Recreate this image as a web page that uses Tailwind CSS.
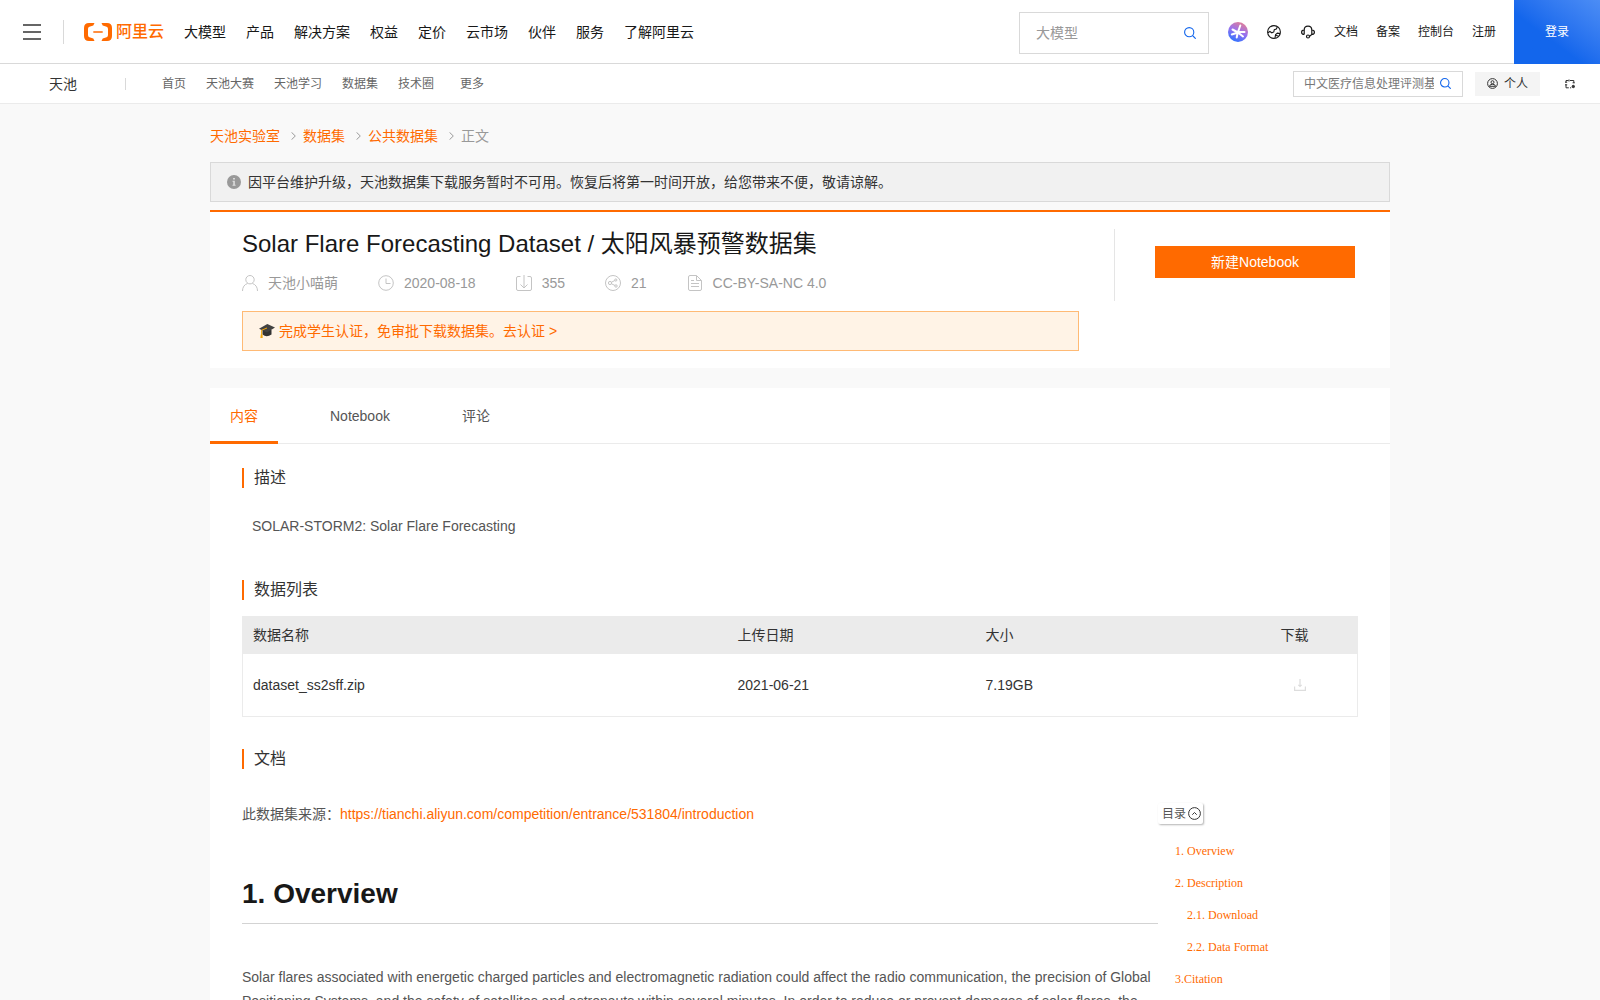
<!DOCTYPE html>
<html lang="zh-CN">
<head>
    <meta charset="UTF-8">
    <meta name="viewport" content="width=device-width, initial-scale=1.0">
    <title>Solar Flare Forecasting Dataset</title>
    <script src="https://cdn.jsdelivr.net/npm/@tailwindcss/browser@4"></script>
</head>
<body class="bg-[#f9f9f9] font-['Liberation_Sans','Noto_Sans_CJK_SC',sans-serif] text-sm text-[#181818]">
    <!-- top bar -->
    <header class="flex h-16 items-center border-b border-[#d9d9d9] bg-white">
        <button aria-label="菜单" class="ml-[23px] text-[#666]">
            <svg class="block" width="18" height="18" viewBox="0 0 18 18" stroke="currentColor" stroke-width="2"><path d="M0 2h18M0 9h18M0 16h18"/></svg>
        </button>
        <div class="ml-[22px] h-6 w-px bg-[#d9d9d9]"></div>
        <a href="#" class="ml-5 flex items-center gap-1 text-[#ff6a00]">
            <svg width="28" height="18" viewBox="0 0 28 18" fill="currentColor"><path d="M10.500 0H5Q0 0 0 5v8q0 5 5 5h5.500L9.300 15.400 5.400 14.300Q4 13.800 4 12V6q0-1.800 1.400-2.300L9.300 2.600zM17.500 0H23q5 0 5 5v8q0 5-5 5h-5.500l1.200-2.600 3.900-1.100Q24 13.800 24 12V6q0-1.800-1.400-2.300l-3.900-1.100zM9.300 8.200h9.400v1.600H9.300z"/></svg>
            <span class="text-base leading-6 font-medium">阿里云</span>
        </a>
        <nav class="ml-5 flex gap-5">
            <a href="#">大模型</a>
            <a href="#">产品</a>
            <a href="#">解决方案</a>
            <a href="#">权益</a>
            <a href="#">定价</a>
            <a href="#">云市场</a>
            <a href="#">伙伴</a>
            <a href="#">服务</a>
            <a href="#">了解阿里云</a>
        </nav>
        <form class="mt-0.5 ml-auto flex h-[42px] w-[190px] items-center border border-[#d9d9d9] pr-3 pl-4">
            <input type="text" aria-label="搜索" placeholder="大模型" class="min-w-0 flex-1 outline-none placeholder:text-[#999]">
            <button aria-label="搜索" class="text-[#1366ec]">
                <svg class="block" width="12" height="12" viewBox="0 0 12 12" fill="none" stroke="currentColor" stroke-width="1.100"><circle cx="5.200" cy="5.200" r="4.600"/><path d="M8.500 8.500l3.200 3.200"/></svg>
            </button>
        </form>
        <div class="ml-[19px] flex items-center pt-px text-xs">
            <a href="#" aria-label="AI 助理">
                <svg width="20" height="20" viewBox="0 0 20 20"><defs><linearGradient id="ai" x1="0.800" y1="0" x2="0.350" y2="1"><stop offset="0" stop-color="#e8808f"/><stop offset="0.500" stop-color="#9a72ee"/><stop offset="1" stop-color="#2f72ff"/></linearGradient></defs><circle cx="10" cy="10" r="10" fill="url(#ai)"/><path d="M12.300 3.500L10 10M4.500 7.500L10 10.500M3.800 12.500l6.200-2M8.700 15.500l1-5M15 14.500l-5-4M16.500 10H10" stroke="#fff" stroke-width="2" stroke-linecap="round"/></svg>
            </a>
            <a href="#" aria-label="语言" class="ml-[19px]">
                <svg width="14" height="14" viewBox="0 0 14 14" fill="none" stroke="currentColor" stroke-width="1.100"><circle cx="7" cy="7" r="6.400"/><path d="M.9 7.800l2-1.300 1.900 1.300 2-.9.5-2.300 2-.6 1-2M8 12.900l.6-3.400 1.800-1.300 2.800.4M9 10.500l2.300.5"/></svg>
            </a>
            <a href="#" aria-label="客服" class="mr-[19px] ml-5">
                <svg width="14" height="14" viewBox="0 0 14 14" fill="none" stroke="currentColor" stroke-width="1.200"><path d="M3.200 9.500V5.200q0-4 3.800-4t3.800 4v4.300L8.600 11.200M3.200 5Q.6 5 .6 7.200t2.600 2.300M10.800 5q2.600 0 2.600 2.200t-2.600 2.300"/><circle cx="7" cy="11.500" r="1.500"/></svg>
            </a>
            <div class="flex gap-[18px]">
                <a href="#">文档</a>
                <a href="#">备案</a>
                <a href="#">控制台</a>
                <a href="#">注册</a>
            </div>
        </div>
        <a href="#" class="ml-[18px] flex h-16 w-[86px] items-center justify-center bg-linear-to-tr from-[#1366ec] from-40% to-[#4c8df5] text-xs text-white">登录</a>
    </header>

    <!-- product bar -->
    <div class="flex h-10 items-center border-b border-[#ebebeb] bg-white text-xs text-[#666]">
        <a href="#" class="ml-[49px] text-sm text-[#333]">天池</a>
        <div class="ml-12 h-3 w-px bg-[#d9d9d9]"></div>
        <nav class="ml-9 flex gap-5 pt-px">
            <a href="#">首页</a>
            <a href="#">天池大赛</a>
            <a href="#">天池学习</a>
            <a href="#">数据集</a>
            <a href="#">技术圈</a>
            <a href="#" class="ml-1.5">更多</a>
        </nav>
        <form class="ml-auto flex h-[26px] w-[170px] items-center gap-1.5 border border-[#d9d9d9] pr-[11px] pl-2.5">
            <input type="text" aria-label="搜索天池" placeholder="中文医疗信息处理评测基准" class="min-w-0 flex-1 outline-none placeholder:text-[#777]">
            <button aria-label="搜索天池" class="text-[#1366ec]">
                <svg class="block" width="11" height="11" viewBox="0 0 12 12" fill="none" stroke="currentColor" stroke-width="1.200"><circle cx="5.200" cy="5.200" r="4.600"/><path d="M8.500 8.500l3.200 3.200"/></svg>
            </button>
        </form>
        <button class="ml-3 flex h-6 w-[65px] items-center justify-center gap-1.5 bg-[#f4f4f4] text-[#333]">
            <svg width="11" height="11" viewBox="0 0 11 11" fill="none" stroke="currentColor"><circle cx="5.500" cy="5.500" r="4.900"/><circle cx="5.500" cy="4.200" r="1.500"/><path d="M2.500 8.300q0-2 3-2t3 2z"/></svg>
            个人
        </button>
        <button aria-label="切换" class="mr-[25px] ml-[25px] text-[#333]">
            <svg class="block" width="10" height="10" viewBox="0 0 10 10" fill="none" stroke="currentColor"><path d="M3.500 1.500H1v2M0 3.200h2.200M5 1.500h3.800v2.300M4 .5v2M7.600 3.800h2.200M1 5.500v3.300h2.800M0 5.800h2.200M5 8.800h1.200"/><circle cx="8.300" cy="7.500" r="1.200" fill="currentColor"/></svg>
        </button>
    </div>

    <main class="mx-auto max-w-[1180px]">
        <nav class="flex h-[58px] items-center gap-[7px] pt-1.5 text-[#ff6a00]">
            <a href="#">天池实验室</a>
            <svg class="ml-1 text-[#999]" width="5" height="8" viewBox="0 0 5 8" fill="none" stroke="currentColor"><path d="M.5 .3L4.300 4 .5 7.700"/></svg>
            <a href="#">数据集</a>
            <svg class="ml-1 text-[#999]" width="5" height="8" viewBox="0 0 5 8" fill="none" stroke="currentColor"><path d="M.5 .3L4.300 4 .5 7.700"/></svg>
            <a href="#">公共数据集</a>
            <svg class="ml-1 text-[#999]" width="5" height="8" viewBox="0 0 5 8" fill="none" stroke="currentColor"><path d="M.5 .3L4.300 4 .5 7.700"/></svg>
            <span class="text-[#999]">正文</span>
        </nav>

        <div class="flex h-10 items-center gap-[7px] border border-[#d9d9d9] bg-[#f1f1f1] px-4 text-[#333]">
            <svg width="14" height="14" viewBox="0 0 14 14"><circle cx="7" cy="7" r="7" fill="#999"/><path d="M6.100 3h1.800v1.500H6.100zM5.500 5.800h2.300v4h.8v.9H5.500v-.9h.8V6.700h-.8z" fill="#e0e0e0"/></svg>
            <p>因平台维护升级，天池数据集下载服务暂时不可用。恢复后将第一时间开放，给您带来不便，敬请谅解。</p>
        </div>

        <!-- dataset summary -->
        <section class="mt-2 flex items-start border-t-2 border-[#ff6a00] bg-white pb-[17px] pl-8">
            <div class="flex-1">
                <h1 class="mt-4 text-2xl leading-8">Solar Flare Forecasting Dataset / 太阳风暴预警数据集</h1>
                <div class="mt-[11px] flex h-6 items-center gap-10 text-[#999]">
                    <span class="flex items-center gap-2.5">
                        <svg width="16" height="16" viewBox="0 0 16 16" fill="none" stroke="#c4c4c4"><circle cx="8" cy="4.700" r="4.200"/><path d="M.5 16c0-4 2-6.500 5-7.500M15.500 16c0-4-2-6.500-5-7.500"/></svg>
                        天池小喵萌
                    </span>
                    <span class="flex items-center gap-2.5">
                        <svg width="16" height="16" viewBox="0 0 16 16" fill="none" stroke="#c4c4c4"><circle cx="8" cy="8" r="7.300"/><path d="M8 3.500v5h4.500"/></svg>
                        2020-08-18
                    </span>
                    <span class="flex items-center gap-2.5">
                        <svg width="16" height="16" viewBox="0 0 16 16" fill="none" stroke="#c4c4c4"><path d="M4.500 1.500H2Q.5 1.500 .5 3v11q0 1.500 1.500 1.500h12q1.500 0 1.500-1.500V3q0-1.500-1.500-1.500h-2.500M8 0v13M4.500 9.500L8 13l3.500-3.500"/></svg>
                        355
                    </span>
                    <span class="flex items-center gap-2.5">
                        <svg width="16" height="16" viewBox="0 0 16 16" fill="none" stroke="#c4c4c4"><circle cx="8" cy="8" r="7.500"/><circle cx="5" cy="8" r="1.600"/><circle cx="10.800" cy="5" r="1.100"/><circle cx="11" cy="11" r="1.200"/><path d="M6.500 7.200l3.300-1.700M6.500 8.800l3.500 1.700"/></svg>
                        21
                    </span>
                    <span class="flex items-center gap-2.5">
                        <svg width="16" height="16" viewBox="0 0 16 16" fill="none" stroke="#c4c4c4"><path d="M9.500 .5H3Q1.500 .5 1.500 2v12q0 1.500 1.500 1.500h10q1.500 0 1.500-1.500V5.500zM9.500 .5v5h5M4 5.500h3M4 8.500h8M4 11.500h8"/></svg>
                        CC-BY-SA-NC 4.0
                    </span>
                </div>
                <a href="#" class="mt-4 flex h-10 items-center gap-1 border border-[#ffba75] bg-[#fff3e6] px-4 text-[#ff6a00]">
                    <svg width="16" height="16" viewBox="0 0 16 16"><path d="M3.500 7v4.500q4 3.500 9 0V7z" fill="#333"/><path d="M0 5.800L8.300 1 16 4.500 8 9.500z" fill="#424242"/><path d="M8 5L2.600 7.200v6" fill="none" stroke="#f2a60c"/><path d="M1.800 11.500h1.700l.2 3.500H1.400z" fill="#f2a60c"/></svg>
                    <span>完成学生认证，免审批下载数据集。去认证 &gt;</span>
                </a>
            </div>
            <div class="mt-[17px] ml-[35px] flex h-[72px] w-[276px] items-start border-l border-[#e5e5e5] pt-[17px] pr-[35px] pl-10">
                <button class="h-8 w-full bg-[#ff6a00] text-white">新建Notebook</button>
            </div>
        </section>

        <section class="mt-5 bg-white">
            <div class="flex h-14 gap-8 border-b border-[#ebebeb] text-[#555]">
                <a href="#" class="-mb-px flex items-center border-b-3 border-[#ff6a00] px-5 pt-[3px] text-[#ff6a00]">内容</a>
                <a href="#" class="flex items-center px-5 pt-px">Notebook</a>
                <a href="#" class="flex items-center px-5 pt-px">评论</a>
            </div>

            <div class="px-8 pt-6 pb-10">
                <h2 class="border-l-2 border-[#ff6a00] pl-2.5 text-base leading-5 text-[#333]">描述</h2>
                <p class="mt-6 px-2.5 leading-7 text-[#555]">SOLAR-STORM2: Solar Flare Forecasting</p>

                <h2 class="mt-10 border-l-2 border-[#ff6a00] pl-2.5 text-base leading-5 text-[#333]">数据列表</h2>
                <table class="mt-4 w-full table-fixed border border-[#ebebeb] text-left text-[#333]">
                    <thead class="bg-[#ebebeb]">
                        <tr class="h-[37px]">
                            <th class="pl-2.5 font-normal">数据名称</th>
                            <th class="w-[248px] pl-2.5 font-normal">上传日期</th>
                            <th class="w-[295px] pl-2.5 font-normal">大小</th>
                            <th class="w-[87px] pl-2.5 font-normal">下载</th>
                        </tr>
                    </thead>
                    <tbody>
                        <tr class="h-[63px]">
                            <td class="pl-2.5">dataset_ss2sff.zip</td>
                            <td class="pl-2.5">2021-06-21</td>
                            <td class="pl-2.5">7.19GB</td>
                            <td class="pl-2.5">
                                <button aria-label="下载" class="flex w-[38px] justify-center text-[#ddd]">
                                    <svg width="12" height="12" viewBox="0 0 12 12" fill="none" stroke="currentColor" stroke-width="1.200"><path d="M.6 7.500v3.900h10.800V7.500M6 0v7M4.300 5.800L6 7.500l1.700-1.700"/></svg>
                                </button>
                            </td>
                        </tr>
                    </tbody>
                </table>

                <h2 class="mt-8 border-l-2 border-[#ff6a00] pl-2.5 text-base leading-5 text-[#333]">文档</h2>
                <div class="mt-8 flex items-start text-[#555]">
                    <article class="flex-1 leading-6">
                        <p class="pt-px">此数据集来源：<a href="#" class="text-[#ff6a00]">https://tianchi.aliyun.com/competition/entrance/531804/introduction</a></p>
                        <h1 class="mt-12 border-b border-[#d3d3d3] pb-[9px] text-[28px] leading-10 font-bold text-[#181818]">1. Overview</h1>
                        <p class="mt-10 pt-px">Solar flares associated with energetic charged particles and electromagnetic radiation could affect the radio communication, the precision of Global Positioning Systems, and the safety of satellites and astronauts within several minutes. In order to reduce or prevent damages of solar flares, the</p>
                    </article>
                    <aside class="w-[200px] text-xs">
                        <button class="mt-0.5 flex h-[21px] w-[45px] items-center gap-0.5 rounded-xs bg-white pl-1 shadow-[1px_1px_2px_rgba(0,0,0,0.3)]">
                            <span class="shrink-0">目录</span>
                            <svg class="shrink-0" width="13" height="13" viewBox="0 0 13 13" fill="none" stroke="#333"><circle cx="6.500" cy="6.500" r="5.900"/><path d="M4.300 7.700l2.200-2.200 2.200 2.200"/></svg>
                        </button>
                        <ul class="mt-[11px] pl-[17px] font-['Liberation_Serif',serif] leading-8 text-[#ff6a00]">
                            <li><a href="#">1. Overview</a></li>
                            <li><a href="#">2. Description</a></li>
                            <li class="pl-3"><a href="#">2.1. Download</a></li>
                            <li class="pl-3"><a href="#">2.2. Data Format</a></li>
                            <li><a href="#">3.Citation</a></li>
                        </ul>
                    </aside>
                </div>
            </div>
        </section>
    </main>
</body>
</html>
